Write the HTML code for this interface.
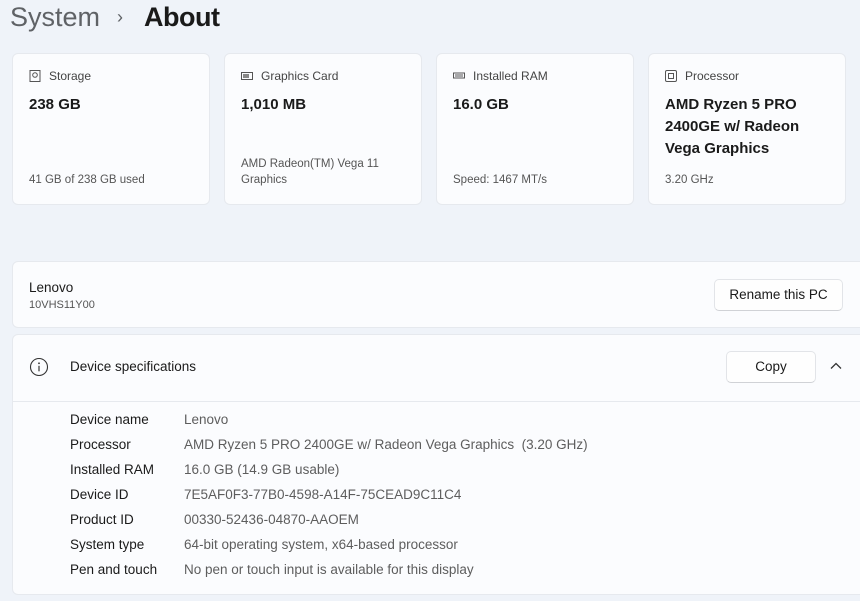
<!DOCTYPE html>
<html><head><meta charset="utf-8"><style>
*{margin:0;padding:0;box-sizing:border-box}
body{width:860px;height:601px;background:#eff3f9;font-family:"Liberation Sans",sans-serif;color:#1a1a1a;position:relative;overflow:hidden}
.t{position:absolute;white-space:nowrap}
.card{position:absolute;top:53px;width:198px;height:152px;background:#fbfcfe;border:1px solid #e6e9ee;border-radius:6px}
.card .h{position:absolute;left:16px;top:15px;font-size:12px;color:#444;display:flex;align-items:center;white-space:nowrap}
.card .h svg{margin-right:8px}
.card .v{position:absolute;left:16px;top:40px;font-size:15px;font-weight:bold;line-height:22px;white-space:nowrap}
.card .s{position:absolute;left:16px;bottom:16px;font-size:11.5px;color:#555;line-height:16px;white-space:nowrap}
.panel{position:absolute;left:12px;width:860px;background:#fbfcfe;border:1px solid #e6e9ee;border-radius:6px}
.btn{position:absolute;background:#fefefe;border:1px solid #e2e4e8;border-bottom-color:#d0d2d6;border-radius:5px;font-size:13.5px;text-align:center;white-space:nowrap}
.row{position:absolute;left:0;width:860px;font-size:13.5px;white-space:nowrap}
.row .l{position:absolute;left:70px;color:#1a1a1a;white-space:nowrap}
.row .r{position:absolute;left:184px;color:#5d5d5d;white-space:nowrap}
</style></head><body>
<div class="t" style="left:10px;top:0px;font-size:27px;color:#5f6266;line-height:34px">System</div>
<div class="t" style="left:117px;top:2px;font-size:18px;color:#5f6266;line-height:30px">›</div>
<div class="t" style="left:144px;top:0px;font-size:27px;color:#1a1a1a;line-height:34px;font-weight:bold;letter-spacing:-0.5px">About</div>

<div class="card" style="left:12px"><div class="h"><svg width="12" height="12" viewBox="0 0 12 12"><rect x="1" y="0.5" width="10" height="11" fill="none" stroke="#555"/><circle cx="6" cy="5" r="2.3" fill="none" stroke="#555"/></svg>Storage</div><div class="v">238 GB</div><div class="s">41 GB of 238 GB used</div></div>
<div class="card" style="left:224px"><div class="h"><svg width="12" height="10" viewBox="0 0 12 10"><rect x="0.5" y="1.5" width="11" height="7" fill="none" stroke="#555"/><rect x="2" y="3" width="6" height="4" fill="#888"/></svg>Graphics Card</div><div class="v">1,010 MB</div><div class="s">AMD Radeon(TM) Vega 11<br>Graphics</div></div>
<div class="card" style="left:436px"><div class="h"><svg width="12" height="8" viewBox="0 0 12 8"><rect x="0.5" y="1" width="11" height="5" fill="none" stroke="#555"/><path d="M3 2v3M5 2v3M7 2v3M9 2v3" stroke="#555"/></svg>Installed RAM</div><div class="v">16.0 GB</div><div class="s">Speed: 1467 MT/s</div></div>
<div class="card" style="left:648px"><div class="h"><svg width="12" height="12" viewBox="0 0 12 12"><rect x="0.5" y="0.5" width="11" height="11" rx="1.5" fill="none" stroke="#555"/><rect x="3.5" y="3.5" width="5" height="5" fill="none" stroke="#555"/></svg>Processor</div><div class="v">AMD Ryzen 5 PRO<br>2400GE w/ Radeon<br>Vega Graphics</div><div class="s">3.20 GHz</div></div>

<div class="panel" style="top:261px;height:67px">
<div class="t" style="left:16px;top:18px;font-size:13.5px">Lenovo</div>
<div class="t" style="left:16px;top:37px;font-size:11px;color:#555">10VHS11Y00</div>
</div>
<div class="btn" style="left:714px;top:279px;width:129px;height:32px;line-height:30px">Rename this PC</div>

<div class="panel" style="top:334px;height:261px">
<div style="position:absolute;left:0;right:0;top:66px;border-top:1px solid #e6e9ee"></div>
</div>
<svg style="position:absolute;left:29px;top:357px" width="20" height="20" viewBox="0 0 20 20"><circle cx="10" cy="10" r="8.5" fill="none" stroke="#333" stroke-width="1.1"/><circle cx="10" cy="6.3" r="0.9" fill="#333"/><path d="M10 8.8v5.5" stroke="#333" stroke-width="1.2"/></svg>
<div class="t" style="left:70px;top:359px;font-size:13.5px">Device specifications</div>
<div class="btn" style="left:726px;top:351px;width:90px;height:32px;line-height:30px">Copy</div>
<svg style="position:absolute;left:829px;top:361px" width="14" height="10" viewBox="0 0 14 10"><path d="M2 7.5L7 2.5L12 7.5" fill="none" stroke="#333" stroke-width="1.3"/></svg>

<div class="row" style="top:412px"><span class="l">Device name</span><span class="r">Lenovo</span></div>
<div class="row" style="top:437px"><span class="l">Processor</span><span class="r">AMD Ryzen 5 PRO 2400GE w/ Radeon Vega Graphics&nbsp;&nbsp;(3.20 GHz)</span></div>
<div class="row" style="top:462px"><span class="l">Installed RAM</span><span class="r">16.0 GB (14.9 GB usable)</span></div>
<div class="row" style="top:487px"><span class="l">Device ID</span><span class="r">7E5AF0F3-77B0-4598-A14F-75CEAD9C11C4</span></div>
<div class="row" style="top:512px"><span class="l">Product ID</span><span class="r">00330-52436-04870-AAOEM</span></div>
<div class="row" style="top:537px"><span class="l">System type</span><span class="r">64-bit operating system, x64-based processor</span></div>
<div class="row" style="top:562px"><span class="l">Pen and touch</span><span class="r">No pen or touch input is available for this display</span></div>
</body></html>
